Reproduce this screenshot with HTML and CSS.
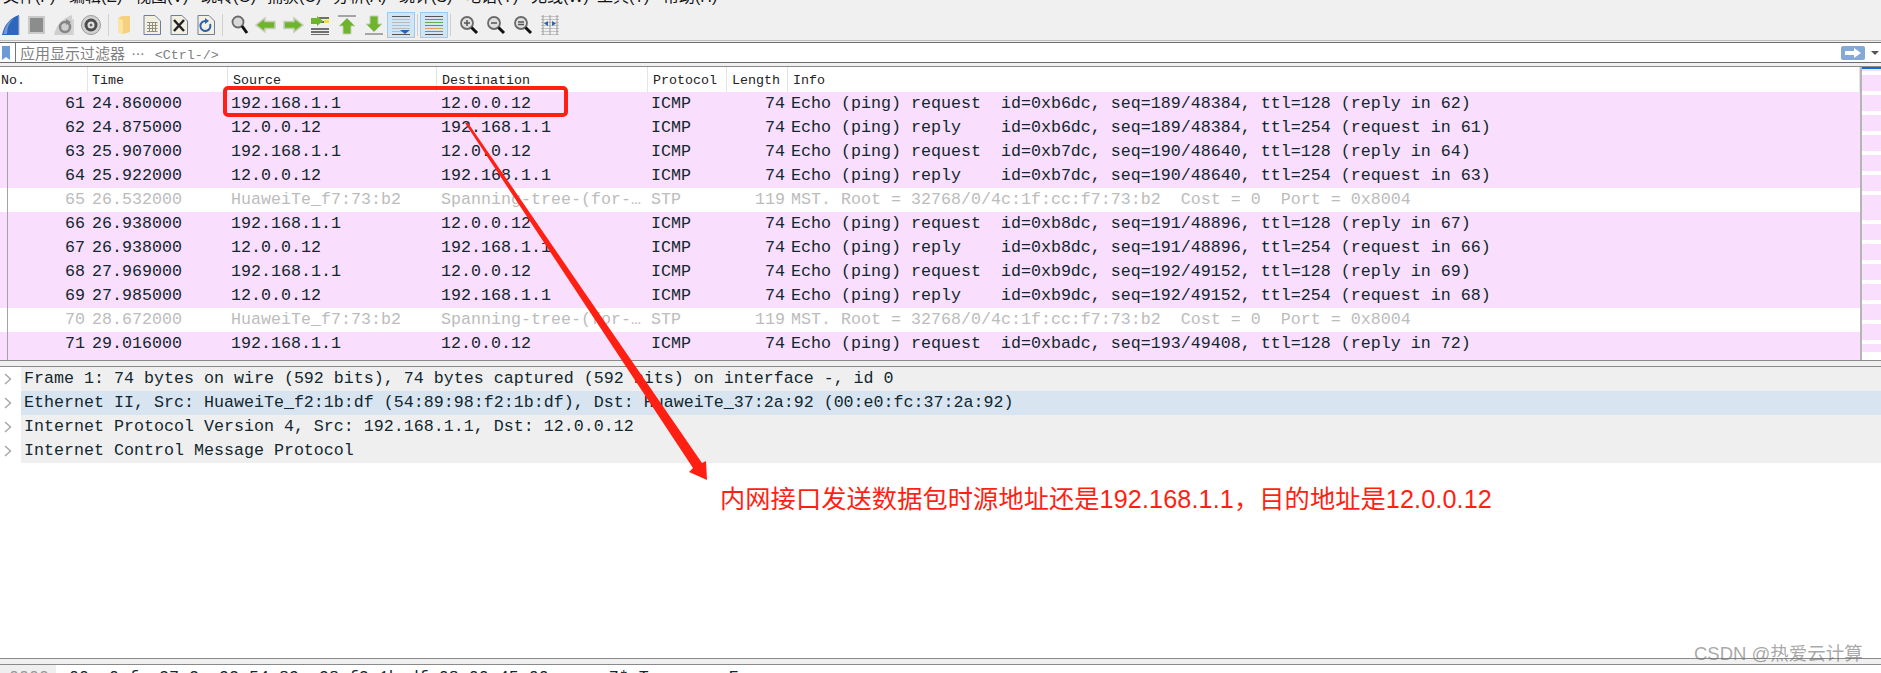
FILE: index.html
```html
<!DOCTYPE html>
<html lang="zh-CN">
<head>
    <meta charset="UTF-8">
    <title>Wireshark</title>
    <link rel="stylesheet" href="styles.css">
</head>
<body>
<div class="app">
  <!-- menu, cut off at the top of the picture -->
  <div class="menu">
    <span class="menu-item">文件(F)</span>
    <span class="menu-item">编辑(E)</span>
    <span class="menu-item">视图(V)</span>
    <span class="menu-item">跳转(G)</span>
    <span class="menu-item">捕获(C)</span>
    <span class="menu-item">分析(A)</span>
    <span class="menu-item">统计(S)</span>
    <span class="menu-item">电话(Y)</span>
    <span class="menu-item">无线(W)</span>
    <span class="menu-item">工具(T)</span>
    <span class="menu-item">帮助(H)</span>
  </div>

  <div class="toolbar">
    <svg class="tool" viewBox="0 0 22 20"><path d="M2 20C4 10 10 3 19 0V20Z" fill="#2f66bd"/><path d="M13 4C9 8 7 13 7 19H3.500C5 11 8.500 6.500 13 4Z" fill="#6f9ad8"/><path d="M19 1V20" stroke="#a9b4c4"/></svg>
    <svg class="tool" viewBox="0 0 22 20"><rect x="1" y="1" width="17" height="18" fill="#cacaca"/><rect x="3" y="3" width="13" height="14" fill="#8c8c8c"/></svg>
    <svg class="tool" viewBox="0 0 22 20"><path d="M0 20C2 10 9 3 18 0V20Z" fill="#cfcfcf"/><circle cx="11" cy="12" r="5" fill="none" stroke="#858585" stroke-width="2.500"/><path d="M12 4L17 7L12 10Z" fill="#858585"/><path d="M19 4V20" stroke="#bbb"/></svg>
    <svg class="tool" viewBox="0 0 22 20"><circle cx="10" cy="10" r="9.500" fill="#d2d2d2" stroke="#9a9a9a"/><circle cx="10" cy="10" r="6.500" fill="#4c4c4c"/><circle cx="10" cy="10" r="3.500" fill="#e2e2e2"/><circle cx="10" cy="10" r="1.500" fill="#666"/></svg>
    <span class="tool-sep"></span>
    <svg class="tool" viewBox="0 0 22 20"><path d="M4 3L8 1H16V17L9 19L4 17Z" fill="#f6d17d"/><path d="M4 3V17L9 19V5Z" fill="#fbe3a4"/></svg>
    <svg class="tool" viewBox="0 0 22 20"><path d="M3 0.500H14L19.500 6V19.500H3Z" fill="#f3f0e2" stroke="#6f7f99"/><path d="M6 7.500H16.500M6 10.500H16.500M6 13.500H16.500M6 16.500H16.500M8.500 7V17M11.500 7V17M14.500 7V17" stroke="#8f8e80"/></svg>
    <svg class="tool" viewBox="0 0 22 20"><path d="M3 0.500H14L19.500 6V19.500H3Z" fill="#f3f0e2" stroke="#6f7f99"/><path d="M6 5L16 16M16 5L6 16" stroke="#222" stroke-width="2.500"/></svg>
    <svg class="tool" viewBox="0 0 22 20"><path d="M3 0.500H14L19.500 6V19.500H3Z" fill="#f3f0e2" stroke="#6f7f99"/><path d="M15 9A5 5 0 1 1 11 6" fill="none" stroke="#2b62b0" stroke-width="2"/><path d="M10 3L14 6L10 9Z" fill="#2b62b0"/></svg>
    <span class="tool-sep"></span>
    <svg class="tool" viewBox="0 0 22 20"><circle cx="10" cy="7" r="5.500" fill="#d9d9d9" stroke="#6a6a6a" stroke-width="1.800"/><path d="M14 11L19 18" stroke="#111" stroke-width="3"/></svg>
    <svg class="tool" viewBox="0 0 22 20"><path d="M1 10L10 3V6.500H20V13.500H10V17Z" fill="#6fb52b" stroke="#c6cdbb" stroke-width="1.500"/></svg>
    <svg class="tool" viewBox="0 0 22 20"><path d="M21 10L12 3V6.500H2V13.500H12V17Z" fill="#6fb52b" stroke="#c6cdbb" stroke-width="1.500"/></svg>
    <svg class="tool" viewBox="0 0 22 20"><path d="M10 3H20M10 7H20M2 14H20M2 17H20M2 20H20" stroke="#444" stroke-width="1.300"/><path d="M14 6L8 1V3H2V9H8V11Z" fill="#6fb52b"/><rect x="15" y="5" width="5" height="3" fill="#f1d95c"/></svg>
    <svg class="tool" viewBox="0 0 22 20"><path d="M2 1H20" stroke="#a5a5a5" stroke-width="2"/><path d="M11 3L19 11H15V19H7V11H3Z" fill="#6fb52b" stroke="#c6cdbb"/></svg>
    <svg class="tool" viewBox="0 0 22 20"><path d="M2 19H20" stroke="#a5a5a5" stroke-width="2"/><path d="M11 17L19 9H15V1H7V9H3Z" fill="#6fb52b" stroke="#c6cdbb"/></svg>
    <svg class="tool tool-on" viewBox="0 0 22 20"><path d="M2 1.500H20" stroke="#555"/><path d="M2 4.500H20M2 7.500H20M2 10.500H20M2 13.500H20M2 16.500H12" stroke="#bbb"/><path d="M2 19.500H20" stroke="#555"/><path d="M10 15H20L15 19Z" fill="#2c62b0"/></svg>
    <span class="tool-sep"></span>
    <svg class="tool tool-on" viewBox="0 0 22 20"><path d="M2 1.500H20" stroke="#555"/><path d="M2 4.500H20" stroke="#e25555"/><path d="M2 7.500H20" stroke="#6fa84f"/><path d="M2 10.500H20" stroke="#5b7fcc"/><path d="M2 13.500H20" stroke="#d0a850"/><path d="M2 16.500H20" stroke="#a06fc0"/><path d="M2 19.500H20" stroke="#555"/></svg>
    <span class="tool-sep"></span>
    <svg class="tool tool-zoom" viewBox="0 0 22 20"><circle cx="9" cy="8" r="6" fill="#e0e0e0" stroke="#6a6a6a" stroke-width="1.800"/><path d="M6 8H12M9 5V11" stroke="#555" stroke-width="1.500"/><path d="M13.500 12.500L19 18" stroke="#111" stroke-width="3"/></svg>
    <svg class="tool" viewBox="0 0 22 20"><circle cx="9" cy="8" r="6" fill="#e0e0e0" stroke="#6a6a6a" stroke-width="1.800"/><path d="M6 8H12" stroke="#555" stroke-width="1.500"/><path d="M13.500 12.500L19 18" stroke="#111" stroke-width="3"/></svg>
    <svg class="tool" viewBox="0 0 22 20"><circle cx="9" cy="8" r="6" fill="#e0e0e0" stroke="#6a6a6a" stroke-width="1.800"/><path d="M6 7H12M6 9.500H12" stroke="#555" stroke-width="1.300"/><path d="M13.500 12.500L19 18" stroke="#111" stroke-width="3"/></svg>
    <svg class="tool" viewBox="0 0 22 20"><path d="M2 1.500H20M2 4.500H20M2 7.500H20M2 10.500H20M2 13.500H20M2 16.500H20M2 19.500H20" stroke="#c4c4c4"/><path d="M4 0V20M11 0V20M18 0V20" stroke="#9a9a9a"/><path d="M9 6V11L5 8.500ZM13 6V11L17 8.500Z" fill="#2c62b0"/></svg>
  </div>

  <div class="filter">
    <svg class="filter-mark" viewBox="0 0 9 14"><path d="M0 0H8V14L4 11L0 14Z" fill="#6c9bd6"/></svg>
    <span class="filter-text">应用显示过滤器 <span class="filter-dots">⋯</span> <span class="filter-key">&lt;Ctrl-/&gt;</span></span>
    <span class="filter-apply"><svg viewBox="0 0 24 14"><path d="M4 5H13V2L20 7L13 12V9H4Z" fill="#fff"/></svg></span>
    <span class="filter-drop"></span>
  </div>

  <div class="packets">
    <div class="packet-table">
      <div class="row head">
        <span class="cell no">No.</span>
        <span class="cell time">Time</span>
        <span class="cell src">Source</span>
        <span class="cell dst">Destination</span>
        <span class="cell proto">Protocol</span>
        <span class="cell len">Length</span>
        <span class="cell info">Info</span>
      </div>
      <div class="row icmp"><span class="cell no">61</span><span class="cell time">24.860000</span><span class="cell src">192.168.1.1</span><span class="cell dst">12.0.0.12</span><span class="cell proto">ICMP</span><span class="cell len">74</span><span class="cell info">Echo (ping) request  id=0xb6dc, seq=189/48384, ttl=128 (reply in 62)</span></div>
      <div class="row icmp"><span class="cell no">62</span><span class="cell time">24.875000</span><span class="cell src">12.0.0.12</span><span class="cell dst">192.168.1.1</span><span class="cell proto">ICMP</span><span class="cell len">74</span><span class="cell info">Echo (ping) reply    id=0xb6dc, seq=189/48384, ttl=254 (request in 61)</span></div>
      <div class="row icmp"><span class="cell no">63</span><span class="cell time">25.907000</span><span class="cell src">192.168.1.1</span><span class="cell dst">12.0.0.12</span><span class="cell proto">ICMP</span><span class="cell len">74</span><span class="cell info">Echo (ping) request  id=0xb7dc, seq=190/48640, ttl=128 (reply in 64)</span></div>
      <div class="row icmp"><span class="cell no">64</span><span class="cell time">25.922000</span><span class="cell src">12.0.0.12</span><span class="cell dst">192.168.1.1</span><span class="cell proto">ICMP</span><span class="cell len">74</span><span class="cell info">Echo (ping) reply    id=0xb7dc, seq=190/48640, ttl=254 (request in 63)</span></div>
      <div class="row stp"><span class="cell no">65</span><span class="cell time">26.532000</span><span class="cell src">HuaweiTe_f7:73:b2</span><span class="cell dst">Spanning-tree-(for-…</span><span class="cell proto">STP</span><span class="cell len">119</span><span class="cell info">MST. Root = 32768/0/4c:1f:cc:f7:73:b2  Cost = 0  Port = 0x8004</span></div>
      <div class="row icmp"><span class="cell no">66</span><span class="cell time">26.938000</span><span class="cell src">192.168.1.1</span><span class="cell dst">12.0.0.12</span><span class="cell proto">ICMP</span><span class="cell len">74</span><span class="cell info">Echo (ping) request  id=0xb8dc, seq=191/48896, ttl=128 (reply in 67)</span></div>
      <div class="row icmp"><span class="cell no">67</span><span class="cell time">26.938000</span><span class="cell src">12.0.0.12</span><span class="cell dst">192.168.1.1</span><span class="cell proto">ICMP</span><span class="cell len">74</span><span class="cell info">Echo (ping) reply    id=0xb8dc, seq=191/48896, ttl=254 (request in 66)</span></div>
      <div class="row icmp"><span class="cell no">68</span><span class="cell time">27.969000</span><span class="cell src">192.168.1.1</span><span class="cell dst">12.0.0.12</span><span class="cell proto">ICMP</span><span class="cell len">74</span><span class="cell info">Echo (ping) request  id=0xb9dc, seq=192/49152, ttl=128 (reply in 69)</span></div>
      <div class="row icmp"><span class="cell no">69</span><span class="cell time">27.985000</span><span class="cell src">12.0.0.12</span><span class="cell dst">192.168.1.1</span><span class="cell proto">ICMP</span><span class="cell len">74</span><span class="cell info">Echo (ping) reply    id=0xb9dc, seq=192/49152, ttl=254 (request in 68)</span></div>
      <div class="row stp"><span class="cell no">70</span><span class="cell time">28.672000</span><span class="cell src">HuaweiTe_f7:73:b2</span><span class="cell dst">Spanning-tree-(for-…</span><span class="cell proto">STP</span><span class="cell len">119</span><span class="cell info">MST. Root = 32768/0/4c:1f:cc:f7:73:b2  Cost = 0  Port = 0x8004</span></div>
      <div class="row icmp"><span class="cell no">71</span><span class="cell time">29.016000</span><span class="cell src">192.168.1.1</span><span class="cell dst">12.0.0.12</span><span class="cell proto">ICMP</span><span class="cell len">74</span><span class="cell info">Echo (ping) request  id=0xbadc, seq=193/49408, ttl=128 (reply in 72)</span></div>
      <div class="row icmp"><span class="cell no"></span></div>
    </div>
    <div class="minimap">
      <div class="mini-now"></div>
      <div class="mini-top"></div>
      <div class="mini-row"></div><div class="mini-row"></div><div class="mini-row"></div><div class="mini-row"></div>
      <div class="mini-row mini-wide"></div><div class="mini-row"></div>
      <div class="mini-row mini-long"></div><div class="mini-row"></div><div class="mini-row"></div><div class="mini-row"></div>
      <div class="mini-row mini-wide"></div><div class="mini-row"></div><div class="mini-row"></div>
      <div class="mini-row mini-end"></div>
    </div>
  </div>

  <div class="split"></div>

  <div class="details">
    <div class="tree-row"><svg class="chev" viewBox="0 0 8 12"><path d="M1 1L6.500 6L1 11" fill="none" stroke="#a8a8a8" stroke-width="1.500"/></svg><span class="tree-text">Frame 1: 74 bytes on wire (592 bits), 74 bytes captured (592 bits) on interface -, id 0</span></div>
    <div class="tree-row tree-sel"><svg class="chev" viewBox="0 0 8 12"><path d="M1 1L6.500 6L1 11" fill="none" stroke="#a8a8a8" stroke-width="1.500"/></svg><span class="tree-text">Ethernet II, Src: HuaweiTe_f2:1b:df (54:89:98:f2:1b:df), Dst: HuaweiTe_37:2a:92 (00:e0:fc:37:2a:92)</span></div>
    <div class="tree-row"><svg class="chev" viewBox="0 0 8 12"><path d="M1 1L6.500 6L1 11" fill="none" stroke="#a8a8a8" stroke-width="1.500"/></svg><span class="tree-text">Internet Protocol Version 4, Src: 192.168.1.1, Dst: 12.0.0.12</span></div>
    <div class="tree-row"><svg class="chev" viewBox="0 0 8 12"><path d="M1 1L6.500 6L1 11" fill="none" stroke="#a8a8a8" stroke-width="1.500"/></svg><span class="tree-text">Internet Control Message Protocol</span></div>
  </div>

  <div class="split"></div>

  <div class="hex">
    <span class="hex-offset">0000</span>
    <span class="hex-bytes">00 e0 fc 37 2a 92 54 89  98 f2 1b df 08 00 45 00   ...7*.T. ......E.</span>
  </div>
</div>

<!-- red notes drawn over the screenshot -->
<div class="note-box"></div>
<svg class="note-arrow" viewBox="0 0 1881 673"><polygon points="465,123 468,123 702,463 706,461 707,480 689,472 693,468" fill="#ff1f13"/></svg>
<p class="note-text">内网接口发送数据包时源地址还是192.168.1.1，目的地址是12.0.0.12</p>
<p class="watermark">CSDN @热爱云计算</p>

</body>
</html>
```

FILE: styles.css
```css
body{
  margin: 0;
  width: 1881px;
  height: 673px;
  position: relative;
  overflow: hidden;
  background-color: #fff;
}

.app{
  display: flex;
  flex-direction: column;
  height: 673px;
  overflow: hidden;
  background-color: #f0f0f0;
  color: #12272e;
  font-family: "Liberation Mono", monospace;
  font-size: 16.67px;
}

/* menu */
.menu{
  display: flex;
  align-items: flex-end;
  height: 7px;
  overflow: hidden;
  padding-left: 3px;
  margin-bottom: 3px;
  font-family: "Liberation Sans", "Noto Sans CJK SC", sans-serif;
  font-size: 16px;
  color: #111;
}

.menu-item{
  width: 66px;
  flex: none;
  line-height: 20px;
}

/* toolbar */
.toolbar{
  display: flex;
  align-items: center;
  gap: 5px;
  height: 31px;
  flex: none;
  box-sizing: border-box;
  border-bottom: 1px solid #bdbdbd;
}

.tool{
  width: 22px;
  height: 20px;
  flex: none;
}

.tool-on{
  background-color: #cfe5f8;
  box-shadow: 0 0 0 2px #cfe5f8, 0 0 0 3px #9bcbf0;
}

.tool-zoom{
  margin-left: 2px;
}

.tool-sep{
  width: 1px;
  height: 22px;
  flex: none;
  background-color: #d0d0d0;
}

/* display filter */
.filter{
  display: flex;
  align-items: center;
  height: 19px;
  flex: none;
  margin-top: 1px;
  background-color: #fff;
  border-top: 1px solid #6d6d6d;
  border-bottom: 1px solid #6d6d6d;
}

.filter-mark{
  width: 9px;
  height: 14px;
  margin-left: 2px;
  flex: none;
}

.filter-text{
  flex: 1;
  margin-left: 4px;
  padding-left: 4px;
  border-left: 1px solid #777;
  height: 19px;
  line-height: 19px;
  font-family: "Noto Sans CJK SC", sans-serif;
  font-size: 15px;
  color: #808080;
  white-space: pre;
}

.filter-dots{
  font-size: 13px;
  margin-left: 3px;
}

.filter-key{
  font-family: "Liberation Mono", monospace;
  font-size: 13.33px;
  margin-left: 7px;
}

.filter-apply{
  width: 24px;
  height: 14px;
  flex: none;
  border-radius: 2px;
  background-color: #85a9d6;
}

.filter-apply svg{
  display: block;
  width: 24px;
  height: 14px;
}

.filter-drop{
  width: 0;
  height: 0;
  flex: none;
  margin: 0 2px 0 6px;
  border-left: 4px solid transparent;
  border-right: 4px solid transparent;
  border-top: 4px solid #555;
}

/* packet list */
.packets{
  display: flex;
  height: 293px;
  flex: none;
  margin-top: 3px;
  border-top: 1px solid #8a8a8a;
  overflow: hidden;
  background-color: #fff;
}

.packet-table{
  flex: 1;
  overflow: hidden;
}

.row{
  display: grid;
  grid-template-columns: 88px 140px 209px 211px 79px 61px 1fr;
  height: 24px;
  line-height: 24px;
  white-space: pre;
}

.icmp{
  background-color: #f9dffd;
}

.stp{
  color: #bcbcbc;
}

.cell{
  padding-left: 3px;
  overflow: hidden;
}

.time, .dst{
  padding-left: 4px;
}

.no, .len{
  padding-right: 3px;
  padding-left: 0;
  text-align: right;
}

.row .no{
  margin-left: 7px;
  border-left: 1px solid #a3a3a3;
}

.head{
  height: 25px;
  line-height: 27px;
  background-color: #fff;
  color: #222;
  font-size: 13.33px;
}

.head .cell{
  padding-left: 5px;
  padding-right: 0;
  text-align: left;
  border-right: 1px solid #e4e4e4;
}

.head .no{
  margin-left: 0;
  padding-left: 1px;
  border-left: none;
}

.head .time{
  padding-left: 4px;
}

/* minimap */
.minimap{
  width: 19px;
  flex: none;
  border-left: 2px solid #b5b5b5;
}

.mini-now{
  height: 2px;
  background-color: #0b6fd0;
}

.mini-top{
  height: 2px;
  margin-bottom: 4px;
  background-color: #f9dffd;
}

.mini-row{
  height: 16px;
  margin-bottom: 4px;
  background-color: #f9dffd;
}

.mini-wide{
  margin-top: 1px;
}

.mini-long{
  height: 25px;
}

.mini-end{
  height: 8px;
}

.split{
  height: 7px;
  flex: none;
  box-sizing: border-box;
  border-top: 1px solid #8a8a8a;
  border-bottom: 1px solid #8a8a8a;
}

/* packet details */
.details{
  flex: 1;
  background-color: #fff;
}

.tree-row{
  display: flex;
  align-items: center;
  height: 24px;
  white-space: pre;
}

.chev{
  width: 8px;
  height: 12px;
  flex: none;
  margin: 0 9px 0 4px;
}

.tree-text{
  flex: 1;
  height: 24px;
  line-height: 24px;
  padding-left: 3px;
  background-color: #efefef;
}

.tree-sel .tree-text{
  background-color: #d8e5f1;
}

/* packet bytes */
.hex{
  display: flex;
  height: 8px;
  flex: none;
  overflow: hidden;
  background-color: #fff;
  line-height: 26px;
  white-space: pre;
}

.hex-offset{
  width: 47px;
  padding-left: 9px;
  background-color: #efefef;
  color: #999;
}

.hex-bytes{
  margin-left: 13px;
}

/* annotations over the screenshot */
.note-box{
  position: absolute;
  left: 223px;
  top: 86px;
  width: 345px;
  height: 31px;
  box-sizing: border-box;
  border: 4px solid #ff1f13;
  border-radius: 5px;
}

.note-arrow{
  position: absolute;
  left: 0;
  top: 0;
  width: 1881px;
  height: 673px;
}

.note-text{
  position: absolute;
  left: 720px;
  top: 483px;
  margin: 0;
  font-family: "Liberation Sans", "Noto Sans CJK SC", sans-serif;
  font-size: 25.2px;
  letter-spacing: 0.12px;
  line-height: 32px;
  color: #ff1f13;
  white-space: nowrap;
}

.watermark{
  position: absolute;
  left: 1694px;
  top: 643px;
  margin: 0;
  font-family: "Liberation Sans", "Noto Sans CJK SC", sans-serif;
  font-size: 18.5px;
  line-height: 22px;
  color: rgba(110, 110, 110, 0.6);
  white-space: nowrap;
}
```
